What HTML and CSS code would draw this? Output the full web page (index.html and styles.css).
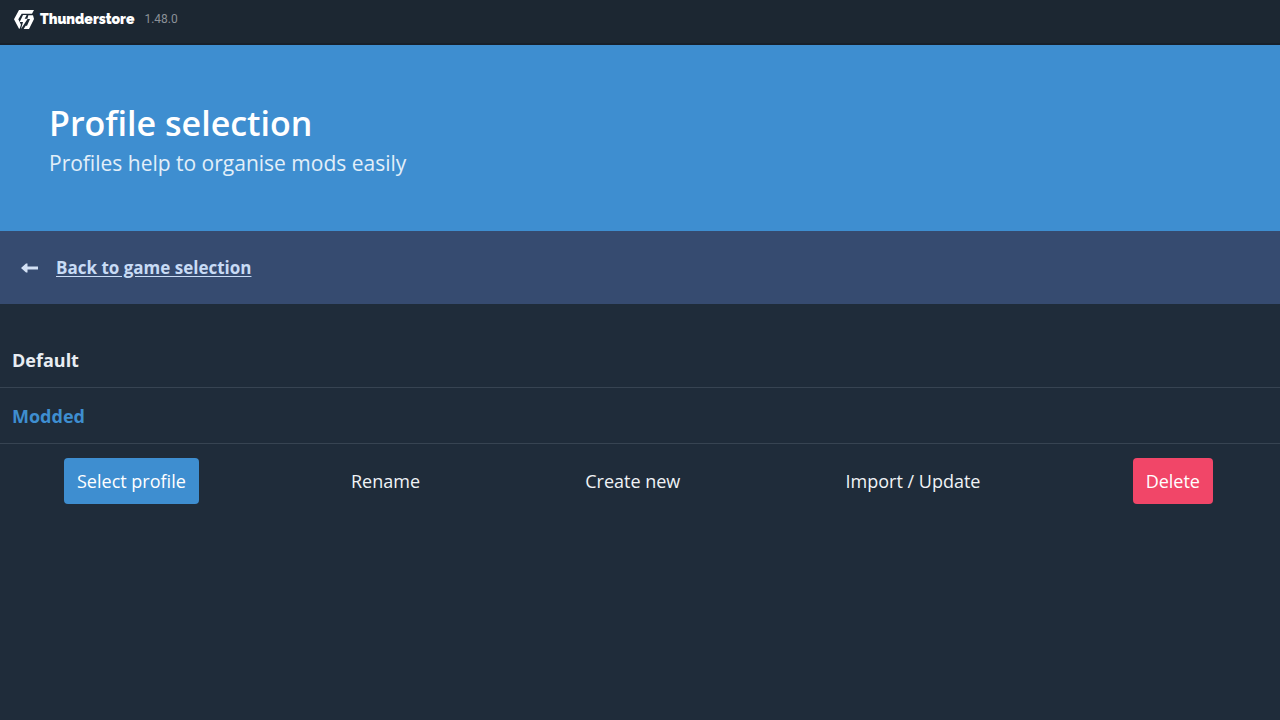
FILE: index.html
```html
<!DOCTYPE html>
<html lang="en">
    <head>
        <meta charset="utf-8">
        <title>Thunderstore</title>
        <link rel="stylesheet" href="styles.css">
    </head>

    <body>

        <header class="topbar">
            <svg class="logo" viewBox="0 0 60 57" aria-hidden="true">
                <path d="M15 0h45l-6 11H23L13 28l8 16-4 12h-2L0 28z"/>
                <path d="M27 15h11l-6 11h9L21 57l6-21H17z"/>
                <path d="M43 16h14l3 11-15 30H29l6-10h4l9-20h-8z"/>
            </svg>
            <span class="brand">Thunderstore</span>
            <span class="version">1.48.0</span>
        </header>

        <section class="hero">
            <h1>Profile selection</h1>
            <p>Profiles help to organise mods easily</p>
        </section>

        <nav class="back">
            <svg class="arrow" viewBox="0 0 18 10" aria-hidden="true">
                <path d="M0 5l5-4.500h1.500v3H17v3H6.500v3H5z"/>
            </svg>
            <a href="#">Back to game selection</a>
        </nav>

        <main>
            <ul class="profiles">
                <li><a href="#">Default</a></li>
                <li><a href="#" class="active">Modded</a></li>
            </ul>

            <div class="actions">
                <button type="button" class="btn info">Select profile</button>
                <button type="button" class="btn">Rename</button>
                <button type="button" class="btn">Create new</button>
                <button type="button" class="btn">Import / Update</button>
                <button type="button" class="btn danger">Delete</button>
            </div>
        </main>

    </body>
</html>
```

FILE: styles.css
```css
* {box-sizing: border-box;}
body {margin: 0; min-height: 100vh; background-color: #1f2c3a; color: #fff; font-family: "Segoe UI", "Open Sans", "Noto Sans", sans-serif; font-size: 18px; line-height: 24px;}
h1, p, ul {margin: 0; padding: 0;}

/* title bar */
.topbar {display: flex; align-items: center; height: 45px; padding: 0 14px 5px; background-color: #1c2732; border-bottom: 2px solid #17202b;}
.logo {width: 20px; height: 19px; margin-right: 6px; fill: #fff;}
.brand {font-family: Raleway, Lato, sans-serif; font-size: 14px; font-weight: 900;}
.version {margin-left: 10px; color: #8b9197; font-family: Roboto, sans-serif; font-size: 12px;}

.hero {padding: 55px 49px 51px; background-color: #3e8ed0;}
.hero h1 {font-size: 34px; font-weight: 600; line-height: 46px;}
.hero p {color: #e2eff9; font-size: 21px; line-height: 34px;}

.back {display: flex; align-items: center; height: 73px; padding: 0 21px; background-color: #364b70;}
.arrow {width: 18px; height: 10px; margin-right: 17px; fill: #d3e1f5;}
.back a {color: #c8dbf5; font-size: 17px; font-weight: 700; text-underline-offset: 2px;}

/* profile list */
.profiles {padding-top: 28px; list-style: none;}
.profiles li {padding: 16px 12px 15px; border-bottom: 1px solid #374452;}
.profiles a {color: #e8edf2; font-weight: 700; text-decoration: none;}
.profiles .active {color: #3e8ed0;}

.actions {display: flex; justify-content: space-between; padding: 14px 67px 14px 64px;}
.btn {padding: 11px 13px; border: 0; border-radius: 4px; background: none; color: #f0f3f6; font: inherit; cursor: pointer;}
.info {background-color: #3e8ed0; color: #fff;}
.danger {background-color: #f14668; color: #fff;}
```
